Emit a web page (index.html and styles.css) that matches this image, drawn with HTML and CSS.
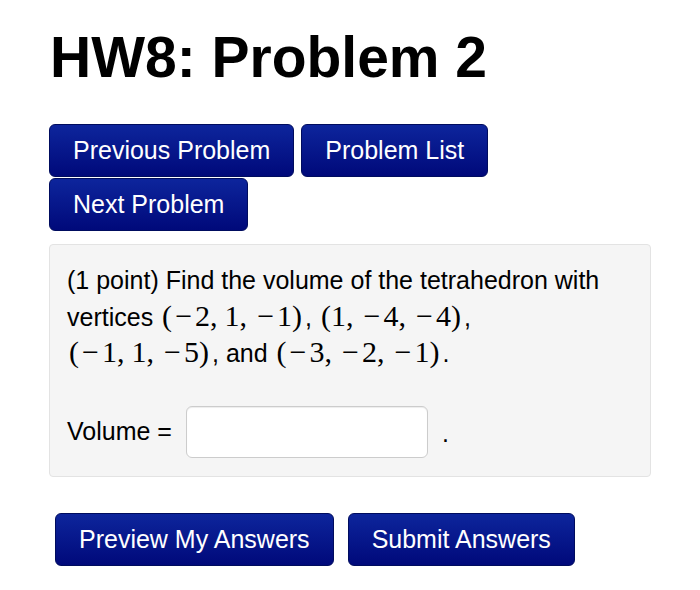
FILE: index.html
```html
<!DOCTYPE html>
<html lang="en">

<head>
    <meta charset="UTF-8">
    <meta name="viewport" content="width=device-width, initial-scale=1.0">
    <title>HW8: Problem 2</title>
    <link rel="stylesheet" href="styles.css">
</head>

<body>
    <div class="page">
        <h1>HW8: Problem 2</h1>

        <div class="nav-buttons">
            <div class="nav-row">
                <button class="btn">Previous Problem</button>
                <button class="btn">Problem List</button>
            </div>
            <div class="nav-row">
                <button class="btn">Next Problem</button>
            </div>
        </div>

        <div class="problem-box">
            <p class="problem-text">
                (1 point) Find the volume of the tetrahedron with vertices
                <span class="math">(<span class="op">−</span>2,<span class="sp"></span>1,<span class="sp"></span><span class="op">−</span>1)</span><span class="after">,</span>
                <span class="math">(1,<span class="sp"></span><span class="op">−</span>4,<span class="sp"></span><span class="op">−</span>4)</span><span class="after">,</span><br>
                <span class="math">(<span class="op">−</span>1,<span class="sp"></span>1,<span class="sp"></span><span class="op">−</span>5)</span><span class="after">, and</span>
                <span class="math">(<span class="op">−</span>3,<span class="sp"></span><span class="op">−</span>2,<span class="sp"></span><span class="op">−</span>1)</span><span class="after">.</span>
            </p>
            <div class="answer-row">
                <label for="volume">Volume =</label>
                <input type="text" id="volume" class="answer-input">
                <span class="dot">.</span>
            </div>
        </div>

        <div class="submit-buttons">
            <button class="btn">Preview My Answers</button>
            <button class="btn">Submit Answers</button>
        </div>
    </div>
</body>

</html>
```

FILE: styles.css
```css
body {
    margin: 0;
    background-color: #fff;
    color: #000;
    font-family: 'Liberation Sans', Arial, sans-serif;
}

.page {
    padding: 0 49px;
}

h1 {
    font-size: 57px;
    font-weight: bold;
    margin: 25px 0 34px 1px;
    line-height: 1.149;
}

.nav-buttons {
    display: flex;
    flex-direction: column;
    gap: 1px;
}

.nav-row {
    display: flex;
    gap: 7px;
}

.btn {
    font-family: 'Liberation Sans', Arial, sans-serif;
    font-size: 25px;
    line-height: 29px;
    color: #fff;
    padding: 11px 23px;
    border: 1px solid #000c5e;
    border-radius: 6px;
    background: linear-gradient(to bottom, #0d259c, #00097a);
    cursor: pointer;
}

.problem-box {
    margin-top: 13px;
    background-color: #f5f5f5;
    border: 1px solid #e3e3e3;
    border-radius: 4px;
    padding: 17px 17px 18px;
}

.problem-text {
    margin: 0 0 34px;
    font-size: 25px;
    line-height: 36.5px;
}

/* MathJax-like inline math */
.math {
    font-family: 'Liberation Serif', 'Times New Roman', serif;
    font-size: 30px;
    line-height: 1;
    white-space: nowrap;
    padding: 0 2px;
}

.math .op {
    display: inline-block;
    width: 23px;
    text-align: center;
}

.math .sp {
    display: inline-block;
    width: 7px;
}

.after {
    margin-left: 1px;
}

.answer-row {
    display: flex;
    align-items: center;
    font-size: 25px;
}

.answer-input {
    width: 242px;
    height: 52px;
    box-sizing: border-box;
    margin: 0 14px 0 14px;
    border: 1px solid #cccccc;
    border-radius: 6px;
    background-color: #fff;
    box-shadow: inset 0 1px 1px rgba(0, 0, 0, 0.075);
}

.dot {
    position: relative;
    top: 2px;
}

.submit-buttons {
    display: flex;
    gap: 14px;
    margin: 36px 0 0 6px;
}
```
